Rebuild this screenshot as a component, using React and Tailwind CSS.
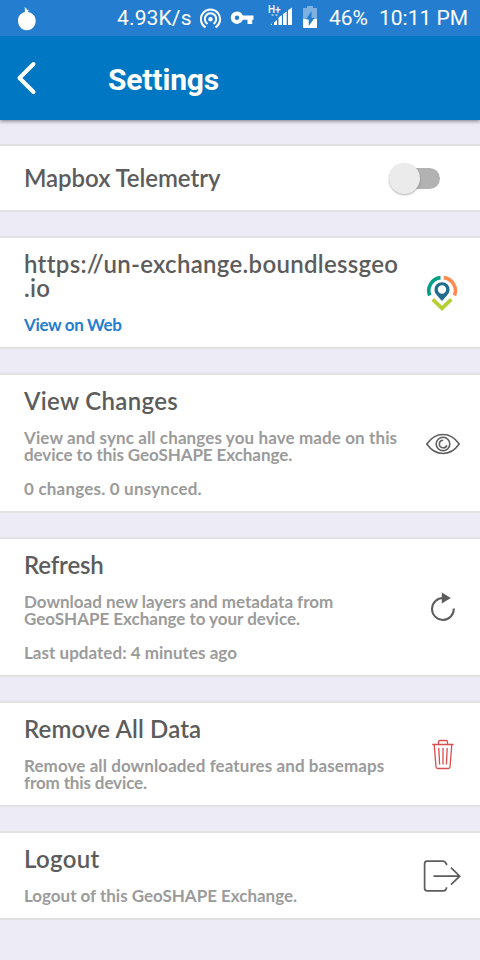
import { clsx } from 'clsx';

const StatusBar = () => (
  <div className="relative z-10 flex h-9 items-center bg-[#257dcf] text-[21px] leading-[38px] text-white">
    <svg className="ml-[17px] h-9 w-5" viewBox="0 0 20 36" fill="#fff">
      <path d="M7.800 6.500l1.300 2.500.7-1 .1 2.400 1.900-.8-.8 2.300c4.500.9 7.700 4.100 7.700 8.500 0 5.700-3.900 9.800-8.900 9.800S1 26 1 20.400c0-4.200 2.900-7.400 6.900-8.400z" />
    </svg>
    <span className="ml-20 w-[75px] whitespace-nowrap tracking-[0.15px]">4.93K/s</span>
    <svg className="ml-2 h-9 w-[22px]" viewBox="0 0 22 36" fill="none" stroke="#fff" strokeWidth="2">
      <path d="M5.500 27.400a9.600 9.600 0 1 1 10 0" />
      <path d="M7.500 23.800a5.700 5.700 0 1 1 6 0" />
      <circle cx="10.500" cy="19.300" r="2.200" fill="#fff" stroke="none" />
    </svg>
    <svg className="ml-2 h-9 w-6" viewBox="0 0 24 36" fill="#fff" fillRule="evenodd">
      <path d="M7 11.500a6.200 6.200 0 0 1 5.800 4H23.500v4.200h-1.300v4.300h-4.700v-4.300h-4.700A6.200 6.200 0 1 1 7 11.500zm0 4a2.200 2.200 0 1 0 0 4.400 2.200 2.200 0 0 0 0-4.400z" />
    </svg>
    <span className="relative ml-[14px] h-9 w-7">
      <span className="absolute left-0 top-[5px] text-[10px] leading-[10px] font-medium">H+</span>
      <svg className="h-9 w-7" viewBox="0 0 28 36" fill="#fff">
        <path d="M2.500 25l1.500-1.500V25zM6 25v-2.500l3-2.500v5zM10.500 25v-7.500l3.400-2.500v10zM15 25V14l3.700-2.500V25zM20 25V10.300L24 7.500V25zM3.500 14.500h2v1h-2zM7.500 14.500h2v1h-2z" />
      </svg>
    </span>
    <svg className="ml-[6px] h-9 w-4" viewBox="0 0 16 36">
      <path d="M1 8h4V6h6v2h4v20H1z" fill="#7eb1e2" />
      <path d="M1 19h14v9H1z" fill="#fff" />
      <path d="M9.500 11v7h3L6.700 26v-6.500H4z" fill="#257dcf" />
    </svg>
    <span className="ml-[11px] w-10 whitespace-nowrap">46%</span>
    <span className="ml-[10px] whitespace-nowrap">10:11 PM</span>
  </div>
);

const Header = () => (
  <header className="flex h-[84px] items-center bg-[#0077c2] text-white shadow-[0_1px_4px_rgba(0,0,0,0.5)]">
    <svg className="ml-4 h-9 w-6" viewBox="0 0 24 36" fill="none" stroke="#fff" strokeWidth="4" strokeLinecap="round" strokeLinejoin="round">
      <path d="M17.500 4L3.500 18l14 14" />
    </svg>
    <h1 className="ml-[68px] mt-0.5 text-[30px] font-bold tracking-[-0.15px]">Settings</h1>
  </header>
);

const ExchangeLogo = () => (
  <svg className="h-[38px] w-8" viewBox="0 0 32 38" fill="none">
    <path d="M14.500 3.600A13.200 13.200 0 0 0 3.700 21.500" stroke="#009f86" strokeWidth="3.600" />
    <path d="M17.700 3.600A13.200 13.200 0 0 1 28.500 21.500" stroke="#ff8b50" strokeWidth="3.600" />
    <path d="M16 27l-4.700-5.300a7.600 7.600 0 1 1 9.400 0zM16 11.300a4.200 4.200 0 1 0 0 8.400 4.200 4.200 0 0 0 0-8.400z" fill="#226b8d" fillRule="evenodd" />
    <path d="M6.700 25.300l9.300 9 9.300-9" stroke="#b6cf36" strokeWidth="3.800" />
  </svg>
);

const EyeIcon = () => (
  <svg className="h-6 w-9" viewBox="0 0 36 24" fill="none" stroke="#606060" strokeWidth="1.600">
    <path d="M1.800 12C6 6 11.500 2.500 18 2.500S30 6 34.200 12C30 18 24.500 21.500 18 21.500S6 18 1.800 12z" />
    <circle cx="18" cy="12" r="6.800" />
    <path d="M18.200 8.200a3.800 3.800 0 1 0 3.600 5" />
  </svg>
);

const RefreshIcon = () => (
  <svg className="h-8 w-7" viewBox="0 0 28 32" fill="none">
    <path d="M14.500 6.100A10.900 10.900 0 1 0 24.800 16.500" stroke="#5c5c5c" strokeWidth="2" />
    <path d="M12.800.6l9 5.400-9 5.400z" fill="#5c5c5c" />
  </svg>
);

const TrashIcon = () => (
  <svg className="h-8 w-6" viewBox="0 0 24 32" fill="none" stroke="#d84e4e" strokeWidth="1.300">
    <path d="M1.200 5.500h21.300M7.500 5.500V3q0-1.500 1.500-1.500h6q1.500 0 1.500 1.500v2.500M3.200 5.500l1.800 22.500q.2 1.500 1.800 1.500h10.400q1.600 0 1.800-1.500L20.800 5.500M7.800 9l.8 16.500M12 9v16.500M16.200 9l-.8 16.500" />
  </svg>
);

const LogoutIcon = () => (
  <svg className="h-8 w-[38px]" viewBox="0 0 38 32" fill="none" stroke="#5c5c5c" strokeWidth="1.700">
    <path d="M23.500 5.200V4q-1.500-2.800-3.500-2.800H4.200Q1.600 1.200 1.600 3.800v24.400q0 2.600 2.600 2.600H20q3.500 0 3.500-3.600M10.500 16.200h26.300M28 7.700l8.700 8.500-8.700 8.500" />
  </svg>
);

const Card = ({ title, children, icon, iconClass }) => (
  <section className="flex justify-between border-y-2 border-[#e1e1e1] bg-white py-[14px] pl-6">
    <div className="whitespace-nowrap">
      <h2 className="text-2xl/6 font-semibold text-[#5c5c5c]">{title}</h2>
      <div className="mt-4 text-[17px]/[17px] font-bold text-[#9b9b9b]">{children}</div>
    </div>
    <div className={clsx('flex items-center pt-px', iconClass)}>{icon}</div>
  </section>
);

// One line of text with its own tracking
const Line = ({ className, children }) => <span className={clsx('block', className)}>{children}</span>;

export default function App() {
  return (
    <div className="h-[960px] w-[480px] overflow-hidden bg-[#edebf5] font-[Roboto,sans-serif]">
      <StatusBar />
      <Header />
      <main className="mt-6 flex flex-col gap-6 font-[Lato,sans-serif]">
        <section className="flex h-[68px] items-center justify-between border-y-2 border-[#e1e1e1] bg-white pl-6 pr-10">
          <h2 className="text-2xl/6 font-semibold tracking-[-0.06px] text-[#5c5c5c]">Mapbox Telemetry</h2>
          <div className="flex h-8 items-center">
            <span className="z-10 h-[31px] w-[31px] rounded-full bg-[#ebebeb] shadow-[0_1px_2px_rgba(0,0,0,0.3)]" />
            <span className="-ml-[15px] h-[21px] w-[35px] rounded-full bg-[#b2b2b2]" />
          </div>
        </section>

        <Card
          title={
            <>
              <Line className="tracking-[0.31px]">https://un-exchange.boundlessgeo</Line>
              <Line className="tracking-[0.33px]">.io</Line>
            </>
          }
          icon={<ExchangeLogo />}
          iconClass="pr-[22px]"
        >
          <Line className="tracking-[-0.35px] text-[#257dcf]">View on Web</Line>
        </Card>

        <Card title={<Line className="tracking-[0.33px]">View Changes</Line>} icon={<EyeIcon />} iconClass="pr-[19px]">
          <Line className="tracking-[0.11px]">View and sync all changes you have made on this</Line>
          <Line className="tracking-[-0.08px]">device to this GeoSHAPE Exchange.</Line>
          <Line className="mt-[17px] tracking-[0.2px]">0 changes. 0 unsynced.</Line>
        </Card>

        <Card title={<Line className="tracking-[-0.15px]">Refresh</Line>} icon={<RefreshIcon />} iconClass="pr-[23px]">
          <Line className="tracking-[-0.02px]">Download new layers and metadata from</Line>
          <Line className="tracking-[-0.02px]">GeoSHAPE Exchange to your device.</Line>
          <Line className="mt-[17px] tracking-[0.03px]">Last updated: 4 minutes ago</Line>
        </Card>

        <Card title={<Line className="tracking-[0.13px]">Remove All Data</Line>} icon={<TrashIcon />} iconClass="pr-[25px]">
          <Line className="tracking-[0.08px]">Remove all downloaded features and basemaps</Line>
          <Line className="tracking-[-0.13px]">from this device.</Line>
        </Card>

        <Card title={<Line className="tracking-[0.33px]">Logout</Line>} icon={<LogoutIcon />} iconClass="pr-[19px]">
          <Line className="tracking-[-0.02px]">Logout of this GeoSHAPE Exchange.</Line>
        </Card>
      </main>
    </div>
  );
}
